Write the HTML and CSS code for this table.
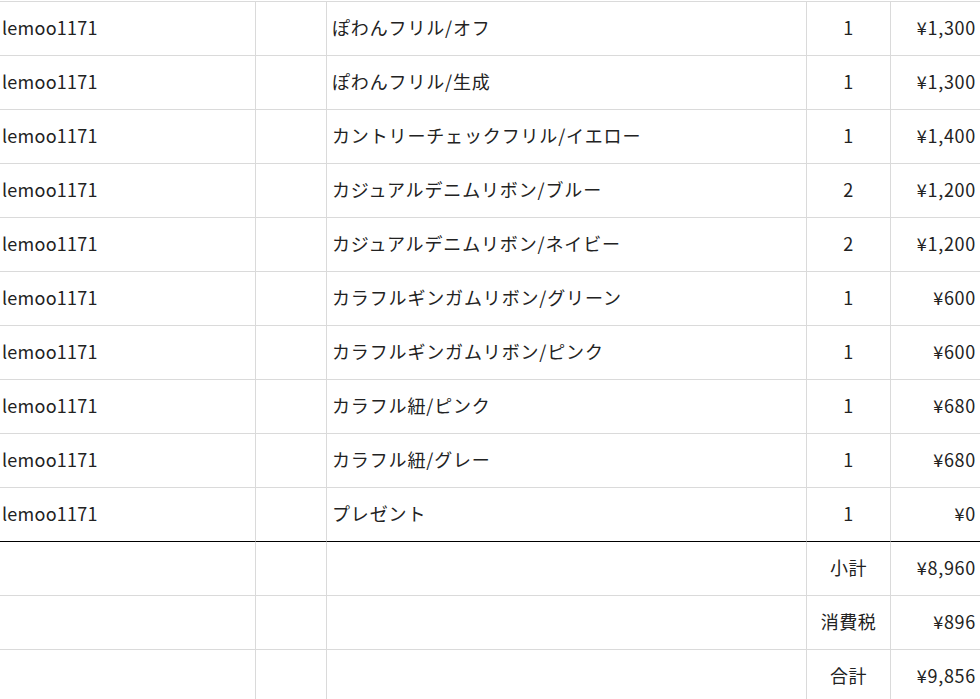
FILE: index.html
```html
<!DOCTYPE html>
<html lang="ja">
<head>
<meta charset="utf-8">
<link rel="stylesheet" href="styles.css">
</head>
<body>
<div class="sheet">
  <div class="row"><div class="c c1">lemoo1171</div><div class="c c2"></div><div class="c c3">ぽわんフリル/オフ</div><div class="c c4">1</div><div class="c c5">¥1,300</div></div>
  <div class="row"><div class="c c1">lemoo1171</div><div class="c c2"></div><div class="c c3">ぽわんフリル/生成</div><div class="c c4">1</div><div class="c c5">¥1,300</div></div>
  <div class="row"><div class="c c1">lemoo1171</div><div class="c c2"></div><div class="c c3">カントリーチェックフリル/イエロー</div><div class="c c4">1</div><div class="c c5">¥1,400</div></div>
  <div class="row"><div class="c c1">lemoo1171</div><div class="c c2"></div><div class="c c3">カジュアルデニムリボン/ブルー</div><div class="c c4">2</div><div class="c c5">¥1,200</div></div>
  <div class="row"><div class="c c1">lemoo1171</div><div class="c c2"></div><div class="c c3">カジュアルデニムリボン/ネイビー</div><div class="c c4">2</div><div class="c c5">¥1,200</div></div>
  <div class="row"><div class="c c1">lemoo1171</div><div class="c c2"></div><div class="c c3">カラフルギンガムリボン/グリーン</div><div class="c c4">1</div><div class="c c5">¥600</div></div>
  <div class="row"><div class="c c1">lemoo1171</div><div class="c c2"></div><div class="c c3">カラフルギンガムリボン/ピンク</div><div class="c c4">1</div><div class="c c5">¥600</div></div>
  <div class="row"><div class="c c1">lemoo1171</div><div class="c c2"></div><div class="c c3">カラフル紐/ピンク</div><div class="c c4">1</div><div class="c c5">¥680</div></div>
  <div class="row"><div class="c c1">lemoo1171</div><div class="c c2"></div><div class="c c3">カラフル紐/グレー</div><div class="c c4">1</div><div class="c c5">¥680</div></div>
  <div class="row"><div class="c c1">lemoo1171</div><div class="c c2"></div><div class="c c3">プレゼント</div><div class="c c4">1</div><div class="c c5">¥0</div></div>
  <div class="row total-start"><div class="c c1"></div><div class="c c2"></div><div class="c c3"></div><div class="c c4">小計</div><div class="c c5">¥8,960</div></div>
  <div class="row"><div class="c c1"></div><div class="c c2"></div><div class="c c3"></div><div class="c c4">消費税</div><div class="c c5">¥896</div></div>
  <div class="row"><div class="c c1"></div><div class="c c2"></div><div class="c c3"></div><div class="c c4">合計</div><div class="c c5">¥9,856</div></div>
</div>
</body>
</html>
```
FILE: styles.css
```css
html, body {
  margin: 0;
  padding: 0;
  background: #ffffff;
}
body {
  font-family: "Noto Sans CJK JP", "Noto Sans", sans-serif;
  font-size: 18px;
  color: #222222;
}
.sheet {
  padding-top: 1px;
  width: 980px;
}
.row {
  display: grid;
  grid-template-columns: 255px 71px 480px 84px 90px;
  height: 54px;
}
.c {
  box-sizing: border-box;
  border-top: 1px solid #dadada;
  display: flex;
  align-items: center;
  padding-bottom: 4px;
  white-space: nowrap;
  overflow: hidden;
}
.c + .c {
  border-left: 1px solid #dadada;
}
.c1 {
  padding-left: 2px;
  letter-spacing: 0.25px;
}
.c3 {
  padding-left: 5px;
  letter-spacing: 0.85px;
}
.c4 {
  justify-content: center;
  letter-spacing: 0.5px;
}
.c5 {
  justify-content: flex-end;
  padding-right: 4px;
  letter-spacing: 0.7px;
}
.total-start .c {
  border-top-color: #000000;
}
```
